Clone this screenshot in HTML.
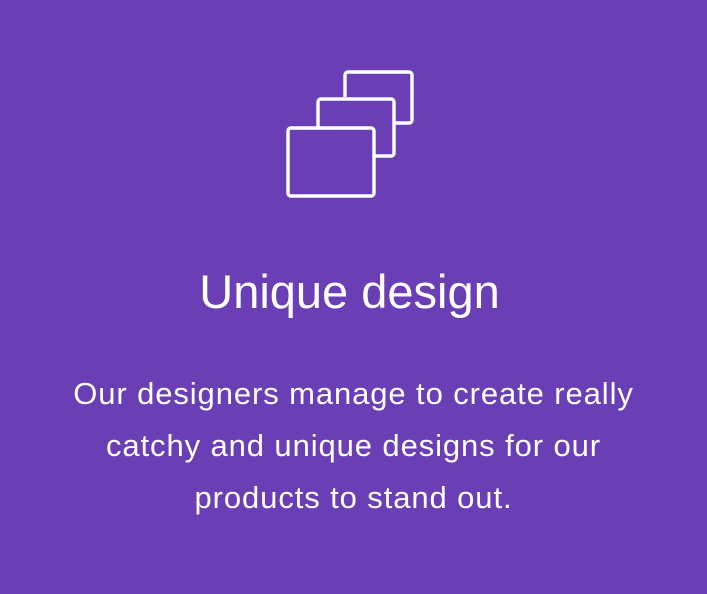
<!DOCTYPE html>
<html><head><style>
html,body{margin:0;padding:0;}
body{width:707px;height:594px;background:#6a3eb5;overflow:hidden;position:relative;font-family:"Liberation Sans",sans-serif;color:#fff;}
svg{position:absolute;left:0;top:0;}
.t{position:absolute;left:-4px;width:707px;text-align:center;top:263px;font-size:47px;line-height:58px;}
.p{position:absolute;left:0;width:707px;text-align:center;top:368px;font-size:31px;line-height:52px;letter-spacing:0.9px;white-space:nowrap;}
</style></head><body>
<svg width="707" height="220" fill="none" stroke="#fff" stroke-width="3.4">
<path d="M345 97 V75 a3 3 0 0 1 3-3 H409 a3 3 0 0 1 3 3 V120 a3 3 0 0 1-3 3 H395"/>
<path d="M318 127 V102 a3 3 0 0 1 3-3 H391 a3 3 0 0 1 3 3 V153 a3 3 0 0 1-3 3 H375"/>
<rect x="288" y="128" width="86" height="68" rx="3"/>
</svg>
<div class="t">Unique design</div>
<div class="p">Our designers manage to create really<br>catchy and unique designs for our<br>products to stand out.</div>
</body></html>
